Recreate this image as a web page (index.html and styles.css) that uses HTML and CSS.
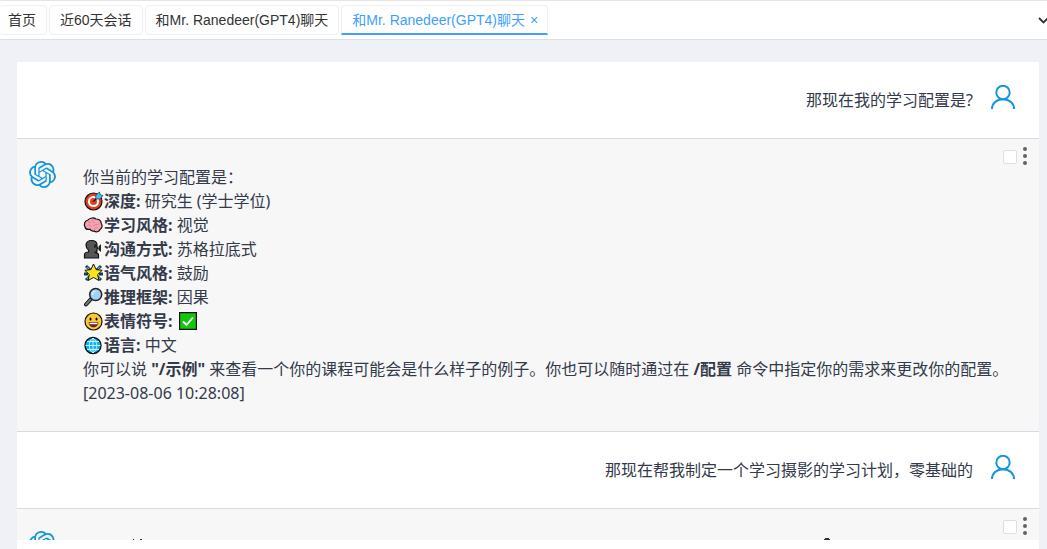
FILE: index.html
```html
<!DOCTYPE html>
<html lang="zh-CN">
<head>
  <meta charset="UTF-8" />
  <meta name="viewport" content="width=device-width, initial-scale=1.0"/>
  <title>和Mr. Ranedeer(GPT4)聊天</title>
  <link rel="stylesheet" href="styles.css">
</head>
<body>
  <!-- Shared icons -->
  <svg class="icon-defs" aria-hidden="true">
    <symbol id="icon-gpt" viewBox="0 0 24 24">
      <path fill="currentColor" d="M22.2819 9.8211a5.9847 5.9847 0 0 0-.5157-4.9108 6.0462 6.0462 0 0 0-6.5098-2.9A6.0651 6.0651 0 0 0 4.9807 4.1818a5.9847 5.9847 0 0 0-3.9977 2.9 6.0462 6.0462 0 0 0 .7427 7.0966 5.98 5.98 0 0 0 .511 4.9107 6.051 6.051 0 0 0 6.5146 2.9001A5.9847 5.9847 0 0 0 13.2599 24a6.0557 6.0557 0 0 0 5.7718-4.2058 5.9894 5.9894 0 0 0 3.9977-2.9001 6.0557 6.0557 0 0 0-.7475-7.0729zm-9.022 12.6081a4.4755 4.4755 0 0 1-2.8764-1.0408l.1419-.0804 4.7783-2.7582a.7948.7948 0 0 0 .3927-.6813v-6.7369l2.02 1.1686a.071.071 0 0 1 .038.052v5.5826a4.504 4.504 0 0 1-4.4945 4.4944zm-9.6607-4.1254a4.4708 4.4708 0 0 1-.5346-3.0137l.142.0852 4.783 2.7582a.7712.7712 0 0 0 .7806 0l5.8428-3.3685v2.3324a.0804.0804 0 0 1-.0332.0615L9.74 19.9502a4.4992 4.4992 0 0 1-6.1408-1.6464zM2.3408 7.8956a4.485 4.485 0 0 1 2.3655-1.9728V11.6a.7664.7664 0 0 0 .3879.6765l5.8144 3.3543-2.0201 1.1685a.0757.0757 0 0 1-.071 0l-4.8303-2.7865A4.504 4.504 0 0 1 2.3408 7.872zm16.5963 3.8558L13.1038 8.364 15.1192 7.2a.0757.0757 0 0 1 .071 0l4.8303 2.7913a4.4944 4.4944 0 0 1-.6765 8.1042v-5.6772a.79.79 0 0 0-.407-.667zm2.0107-3.0231l-.142-.0852-4.7735-2.7818a.7759.7759 0 0 0-.7854 0L9.409 9.2297V6.8974a.0662.0662 0 0 1 .0284-.0615l4.8303-2.7866a4.4992 4.4992 0 0 1 6.6802 4.66zM8.3065 12.863l-2.02-1.1638a.0804.0804 0 0 1-.038-.0567V6.0742a4.4992 4.4992 0 0 1 7.3757-3.4537l-.142.0805L8.704 5.459a.7948.7948 0 0 0-.3927.6813zm1.0976-2.3654l2.602-1.4998 2.6069 1.4998v2.9994l-2.5974 1.4997-2.6067-1.4997Z"/>
    </symbol>
    <symbol id="icon-user" viewBox="0 0 24 24">
      <g fill="none" stroke="currentColor" stroke-width="2">
        <circle cx="12" cy="7.500" r="6.700"/>
        <path d="M1 24c0-5.500 4.500-9.700 11-9.700s11 4.200 11 9.700"/>
      </g>
    </symbol>
    <symbol id="icon-more" viewBox="0 0 4 18">
      <g fill="currentColor">
        <circle cx="2" cy="2" r="2"/><circle cx="2" cy="9" r="2"/><circle cx="2" cy="16" r="2"/>
      </g>
    </symbol>
  </svg>

  <nav class="tab-bar">
    <a class="tab" href="#">首页</a>
    <a class="tab" href="#">近60天会话</a>
    <a class="tab" href="#">和Mr. Ranedeer(GPT4)聊天</a>
    <a class="tab active" href="#">和Mr. Ranedeer(GPT4)聊天<span class="tab-close">×</span></a>
    <button class="tab-more" aria-label="更多">
      <svg viewBox="0 0 12 7" width="12" height="7"><path d="M1 1l4.500 4.500L10 1" fill="none" stroke="#333" stroke-width="1.800"/></svg>
    </button>
  </nav>

  <main class="chat">
    <div class="chat-list">
      <div class="message user">
        <p class="text">那现在我的学习配置是?</p>
        <svg class="avatar"><use href="#icon-user"/></svg>
      </div>

      <div class="message bot">
        <svg class="avatar"><use href="#icon-gpt"/></svg>
        <div class="text">
          <p>你当前的学习配置是：</p>
          <p><svg class="emoji" viewBox="0 0 21 20" role="img" aria-label="🎯"><circle cx="10.500" cy="10.500" r="8.500" fill="#e83a1c" stroke="#111" stroke-width="1.200"/><circle cx="10.500" cy="10.500" r="5.600" fill="#fff"/><circle cx="10.500" cy="10.500" r="3.500" fill="#e83a1c"/><path d="M10.500 10.500l5-5" stroke="#111" stroke-width="1.400"/><path d="M12.500 8l.5-4 3.500-3 .7 2.800 2.800.7-3 3.500z" fill="#3cc3f0" stroke="#234" stroke-width=".7"/></svg><b>深度:</b> 研究生 (学士学位)</p>
          <p><svg class="emoji" viewBox="0 0 21 20" role="img" aria-label="🧠"><path d="M2 12C.5 9 2 5.500 5 5c2-2.500 6-2.500 8-1 3 0 5 2 5.300 4.500 1.500 2 .7 5-1.300 6-1 2.500-4 3-6 1.500-2 .3-3.500-.5-4-1.700C4.500 14.800 2.500 14 2 12z" fill="#f5a3b2" stroke="#111" stroke-width="1.200"/><path d="M5 6c0 2 2 2 3 1M4 11c2-2 4-1 4 1M10 4c-1 2 0 4 2 3.500M10 11c2-2 4-1 6-2M11 15c0-2 2-3 4-2" fill="none" stroke="#d9788c" stroke-width=".8"/></svg><b>学习风格:</b> 视觉</p>
          <p><svg class="emoji" viewBox="0 0 21 20" role="img" aria-label="🗣"><path d="M1.500 19v-3c0-2 1.500-3 4-3v-2C4 10 3 8 3 6c0-3 2.500-4.500 5.500-4.500S14 3 14 6v2l1 1.500-1 .5v2c0 1-1 1.500-2.500 1.300 2.500.2 4 1 4 2.700v3z" fill="#555" stroke="#111" stroke-width="1.200"/><path d="M11 6c2-2 3 0 3 2l-3 1zM15.500 7.500L18 5v8l-2.500-2z" fill="#222"/></svg><b>沟通方式:</b> 苏格拉底式</p>
          <p><svg class="emoji" viewBox="0 0 21 20" role="img" aria-label="🌟"><path d="M3 3l15 14M18 3L3 17M1 11h4M16 11h4" stroke="#163c48" stroke-width="3"/><path d="M4 4l2 2M17 4l-2 2M4 16l2-2M17 16l-2-2" stroke="#39b7d7" stroke-width="1.200"/><path d="M10.500 1l2.600 5.600 6.100.7-4.500 4.200 1.200 6-5.400-3-5.400 3 1.200-6L1.800 7.300l6.100-.7z" fill="#ffe21a" stroke="#111"/></svg><b>语气风格:</b> 鼓励</p>
          <p><svg class="emoji" viewBox="0 0 21 20" role="img" aria-label="🔎"><path d="M8 12l-5 5.500" stroke="#111" stroke-width="4" stroke-linecap="round"/><path d="M7.500 12.500l-4.500 5" stroke="#777" stroke-width="2" stroke-linecap="round"/><circle cx="12.700" cy="7.500" r="6" fill="#9fd3f5" stroke="#222" stroke-width="1.500"/><path d="M9.500 8c0-2 1-3.500 3-3.500" fill="none" stroke="#dff3ff" stroke-width="1.200"/></svg><b>推理框架:</b> 因果</p>
          <p><svg class="emoji" viewBox="0 0 21 20" role="img" aria-label="😀"><circle cx="10.500" cy="10.500" r="8.500" fill="#fcc63a" stroke="#111" stroke-width="1.200"/><ellipse cx="7.500" cy="8" rx="1" ry="1.500"/><ellipse cx="13.500" cy="8" rx="1" ry="1.500"/><path d="M6 11.500h9c0 2.700-2 4.500-4.500 4.500S6 14.200 6 11.500z" fill="#7a2418" stroke="#111" stroke-width=".6"/><path d="M6.500 11.700h8v1.500h-8z" fill="#fff"/></svg><b>表情符号:</b> <svg class="emoji" viewBox="0 0 21 20" role="img" aria-label="✅"><path d="M2.600 1.600h16.800v16.800H2.600z" fill="#16c60c" stroke="#111" stroke-width="1.200"/><path d="M6 10.500l3.500 3.500L16 6.500" fill="none" stroke="#fff" stroke-width="1.800"/></svg></p>
          <p><svg class="emoji" viewBox="0 0 21 20" role="img" aria-label="🌐"><circle cx="10" cy="10.500" r="8" fill="#0bb4ee" stroke="#111" stroke-width="1.400"/><path d="M10 3v15M2.500 10.500h15M4 6.500h12M4 14.500h12M10 3c-5 4-5 11 0 15M10 3c5 4 5 11 0 15" fill="none" stroke="#d8f5ff" stroke-width=".9"/></svg><b>语言:</b> 中文</p>
          <p>你可以说 <b>"/示例"</b> 来查看一个你的课程可能会是什么样子的例子。你也可以随时通过在 <b>/配置</b> 命令中指定你的需求来更改你的配置。</p>
          <p>[2023-08-06 10:28:08]</p>
        </div>
        <div class="actions">
          <input type="checkbox" aria-label="选择消息">
          <button aria-label="消息菜单"><svg width="4" height="18"><use href="#icon-more"/></svg></button>
        </div>
      </div>

      <div class="message user">
        <p class="text">那现在帮我制定一个学习摄影的学习计划，零基础的</p>
        <svg class="avatar"><use href="#icon-user"/></svg>
      </div>

      <div class="message bot">
        <svg class="avatar"><use href="#icon-gpt"/></svg>
        <!-- tops of the first line, the rest is below the fold -->
        <svg class="peek" width="760" height="24" aria-hidden="true">
          <path d="M50 4h1v1h-1zM57 4h2v1h-2zM741 4h6v1h-6zM742 3h4v1h-4z" fill="#333"/>
        </svg>
        <div class="actions">
          <input type="checkbox" aria-label="选择消息">
          <button aria-label="消息菜单"><svg width="4" height="18"><use href="#icon-more"/></svg></button>
        </div>
      </div>
    </div>
  </main>
</body>
</html>
```
FILE: styles.css
```css
:root {
  --blue: #409eff;
  --icon-blue: #1296db;
  --text: #343a4a;
  --line: #d8d9e2;
  --page-bg: #f0f1f6;
}

* {
  box-sizing: border-box;
}

body {
  margin: 0;
  height: 100vh;
  display: flex;
  flex-direction: column;
  overflow: hidden;
  background: var(--page-bg);
  color: var(--text);
  font-family: "Noto Sans", "Noto Sans CJK SC", sans-serif;
}

p {
  margin: 0;
}

button {
  border: none;
  background: none;
  padding: 0;
  cursor: pointer;
}

svg {
  flex-shrink: 0;
}

.icon-defs {
  position: absolute;
  width: 0;
  height: 0;
}

/* Tabs */
.tab-bar {
  display: flex;
  align-items: center;
  gap: 2px;
  height: 40px;
  flex-shrink: 0;
  overflow: hidden;
  background: #fff;
  border-top: 1px solid #e6e6e6;
  border-bottom: 1px solid #dcdfe6;
  font-family: "Liberation Sans", "Noto Sans CJK SC", sans-serif;
  font-size: 14px;
}

.tab {
  height: 30px;
  line-height: 28px;
  padding: 0 10px;
  border: 1px solid #f0f0f0;
  border-radius: 4px;
  color: #333;
  text-decoration: none;
  white-space: nowrap;
}

.tab:first-child {
  border-left: none;
  padding-left: 8px;
}

.tab.active {
  padding-right: 9px;
  color: var(--blue);
  border-bottom: 2px solid var(--blue);
  border-radius: 4px 4px 0 0;
}

.tab-close {
  margin-left: 5px;
}

.tab-more {
  display: flex;
  margin-left: auto;
  margin-right: -3px;
}

/* Chat */
.chat {
  flex: 1;
  min-height: 0;
  margin: 22px 8px 0 17px;
  padding-bottom: 9px;
  background: #fff;
}

.chat-list {
  height: 100%;
  overflow: hidden;
}

.message {
  position: relative;
  display: flex;
  align-items: flex-start;
  padding: 26px 24px 26px 12px;
  border-bottom: 1px solid var(--line);
  font-size: 16px;
  line-height: 24px;
}

.message.user {
  justify-content: flex-end;
  gap: 18px;
}

.message.bot {
  gap: 27px;
  background: #f7f7f8;
}

.avatar {
  width: 24px;
  height: 24px;
  margin-top: -3px;
  color: var(--icon-blue);
}

.bot .avatar {
  width: 27px;
  height: 27px;
  margin-top: -4px;
}

.emoji {
  width: 21px;
  height: 20px;
  vertical-align: -4px;
}

.text p {
  height: 24px;
  white-space: nowrap;
}

.actions {
  position: absolute;
  top: 8px;
  right: 12px;
  display: flex;
  align-items: center;
  gap: 6px;
}

.actions input {
  appearance: none;
  width: 14px;
  height: 14px;
  margin: 2px 0 0;
  background: #fff;
  border: 1px solid #dcdfe6;
  border-radius: 2px;
}

.actions button {
  display: flex;
  color: #606266;
}
```
